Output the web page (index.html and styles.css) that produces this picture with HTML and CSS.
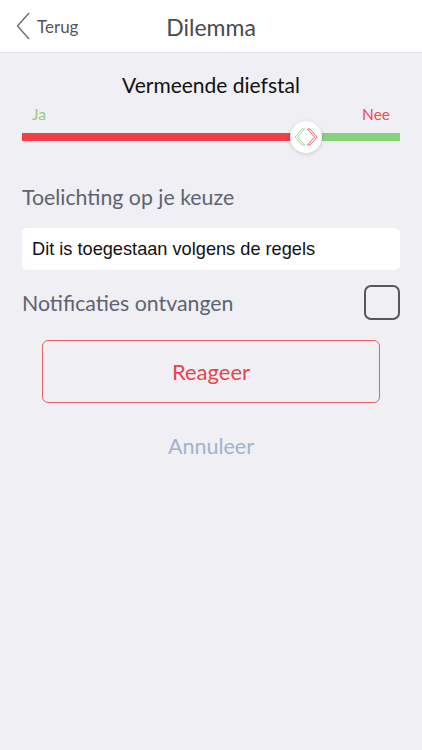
FILE: index.html
```html
<!DOCTYPE html>
<html lang="nl">
<head>
<meta charset="utf-8">
<title>Dilemma</title>
<link rel="stylesheet" href="styles.css">
</head>
<body>
<header class="navbar">
  <a class="back" href="#">
    <svg class="back-icon" width="14" height="28" viewBox="0 0 14 28"><path d="M13 1 L1.5 14 L13 27" fill="none" stroke="#6b6b70" stroke-width="1.4"/></svg>
    <span>Terug</span>
  </a>
  <h1 class="title">Dilemma</h1>
</header>
<main class="content">
  <h2 class="question">Vermeende diefstal</h2>
  <div class="scale-labels">
    <span class="yes">Ja</span>
    <span class="no">Nee</span>
  </div>
  <div class="slider">
    <div class="track-red" style="width: 71.4%"></div>
    <div class="thumb">
      <svg width="24" height="18" viewBox="0 0 24 18">
        <path d="M8 1 L1 9 L8 17 L10.5 17 L3.5 9 L10.5 1 Z" fill="none" stroke="#9ad88c" stroke-width="0.9" stroke-linejoin="round"/>
        <path d="M16 1 L23 9 L16 17 L13.5 17 L20.5 9 L13.5 1 Z" fill="none" stroke="#ef5560" stroke-width="0.9" stroke-linejoin="round"/>
      </svg>
    </div>
    <div class="track-green"></div>
  </div>
  <label class="field-label">Toelichting op je keuze</label>
  <div class="input">Dit is toegestaan volgens de regels</div>
  <div class="check-row">
    <span class="field-label">Notificaties ontvangen</span>
    <span class="checkbox"></span>
  </div>
  <button class="btn-primary">Reageer</button>
  <button class="btn-link">Annuleer</button>
</main>
</body>
</html>
```
FILE: styles.css
```css
* { box-sizing: border-box; }
html, body {
  margin: 0;
  padding: 0;
  height: 100%;
  background: #efeff4;
  font-family: Lato, "Open Sans", sans-serif;
}
.navbar {
  height: 53px;
  background: #fff;
  border-bottom: 1px solid #e4e4e8;
  display: flex;
  align-items: center;
  justify-content: center;
  position: relative;
}
.back {
  position: absolute;
  left: 16px;
  top: 12px;
  display: flex;
  align-items: center;
  gap: 7px;
  text-decoration: none;
  color: #55555a;
  font-size: 17px;
}
.back span { margin-top: 1px; }
.title {
  margin: 0;
  font-weight: 400;
  font-size: 23px;
  color: #4a4a4f;
  padding-top: 1px;
}
.content {
  padding: 18px 22px 0;
  display: flex;
  flex-direction: column;
}
.question {
  margin: 0;
  text-align: center;
  font-weight: 400;
  font-size: 21px;
  color: #111;
  line-height: 28px;
}
.scale-labels {
  display: flex;
  justify-content: space-between;
  font-size: 15.5px;
  padding: 0 10px;
  margin-top: 5px;
  line-height: 20px;
}
.yes { color: #8ccf80; }
.no { color: #ef4a55; }
.slider {
  display: flex;
  align-items: center;
  height: 32px;
  margin-top: -3px;
}
.track-red {
  height: 8px;
  background: #f53d48;
}
.track-green {
  flex: 1;
  height: 8px;
  background: #86d17a;
}
.thumb {
  width: 32px;
  height: 32px;
  flex: none;
  border-radius: 50%;
  background: #fff;
  margin: 0 -2px;
  box-shadow: 0 1px 4px rgba(0,0,0,0.16);
  display: flex;
  align-items: center;
  justify-content: center;
  position: relative;
  z-index: 1;
}
.field-label {
  font-size: 21.3px;
  color: #5d6372;
  line-height: 28px;
}
.content > .field-label { margin-top: 30px; }
.input {
  margin-top: 17px;
  background: #fff;
  border-radius: 5px;
  height: 42px;
  display: flex;
  align-items: center;
  padding: 0 10px;
  font-family: "Liberation Sans", Arial, sans-serif;
  font-size: 18.2px;
  color: #111;
}
.check-row {
  margin-top: 15px;
  display: flex;
  justify-content: space-between;
  align-items: center;
}
.checkbox {
  width: 36px;
  height: 35px;
  border: 2px solid #56565b;
  border-radius: 7px;
}
.btn-primary {
  margin: 20px 20px 0;
  height: 63px;
  background: transparent;
  border: 1.2px solid #e8606b;
  border-radius: 6px;
  font-family: Lato, sans-serif;
  font-size: 22px;
  color: #e8434f;
}
.btn-link {
  margin-top: 29px;
  background: none;
  border: 0;
  font-family: Lato, sans-serif;
  font-size: 21.5px;
  color: #a2b3cb;
}
```
